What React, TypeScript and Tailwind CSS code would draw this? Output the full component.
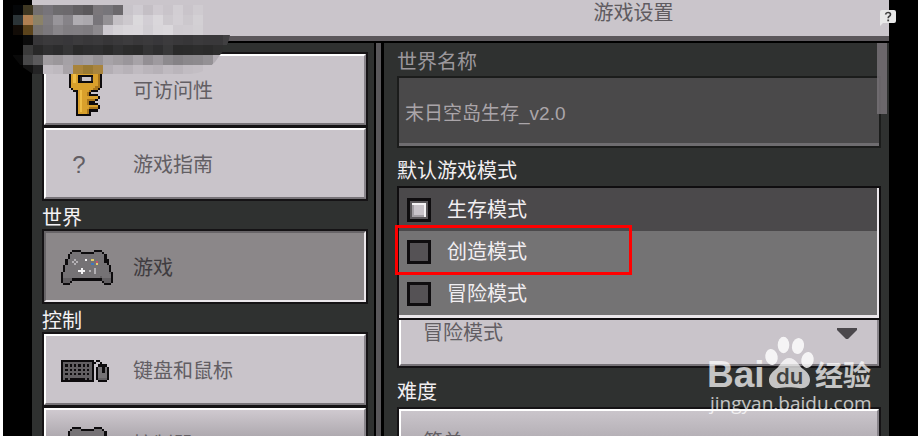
import { useState } from 'react'
import type { ReactNode } from 'react'

const COLORS: Record<string, string> = {
    X: '#0d0b0d',
    g: '#757275',
    d: '#625f62',
    l: '#b3b0b4',
    W: '#f4f2f4',
    Y: '#e0cf6a',
    R: '#c8506a',
    B: '#3f78c0',
    k: '#2c2a2c',
    y: '#d9a02b',
    h: '#efbd45',
    o: '#a8751c',
    c: '#c9c4ca'
}

const CONTROLLER = [
    '.....XXXX......XXXX.....',
    '....XggggXXXXXXggggX....',
    '...XggggggggggggggggX...',
    '...XggggggggggggggggX...',
    '..XggglggggWggYgggggXX..',
    '..XgglglggggggggRgggXX..',
    '..XggglgggggggBgYggggX..',
    '.XggggggggggggggggggggX.',
    '.XgggggggWggggglggggggX.',
    '.XggggggWWWgglglggggggX.',
    'XggggggggWggggglggggggdX',
    'XggggggggggggggggggggggX',
    'XgggggggggggggggggdggggX',
    'XddddXXXXXXXXXXXXXXddddX',
    'XdddX..............XdddX',
    '.XXX................XXX.'
]

const KEY = [
    '..XXXXXXXXXXX..',
    '.XyyyyyyyyyyyX.',
    'XyhhhhhhhhhhyoX',
    'XyhyyyyyyyyyyoX',
    'XyhyXXXXXXXyyoX',
    'XyhyXkcccckyyoX',
    'XyhyXkcccckyyoX',
    'XyhyXXXXXXXyyoX',
    'XyyyyyyyyyyyyoX',
    'XyyyyyyyyyyyooX',
    '.XyyyyyyyyyooX.',
    '..XXyhyyyoXXX..',
    '...XyhyyoX.....',
    '...XyhyyoXXXX..',
    '...XyhyyyyyyyX.',
    '...XyhyyooooX..',
    '...XyhyyoXXX...',
    '...XyhyyoXXXX..',
    '...XyhyyyyyyyX.',
    '...XyhyyyooooX.',
    '...XyhyyoXXXX..',
    '...XyyyyoX.....',
    '...XXXXXXX.....'
]

const KEYBOARD = [
    'XXXXXXXXXXXXXXX.XX....',
    'XdddddddddddddXX..X...',
    'XdXdXdXdXdXdXdX..XXXX.',
    'XdddddddddddddX.XggXgX',
    'XdXdXdXdXdXdXdX.XggXgX',
    'XdddddddddddddX.XggXgX',
    'XdXdXdXdXdXdXdX.XggggX',
    'XdddddddddddddX.XggggX',
    'XdXdXXXXXXXdXdX.XddddX',
    'XXXXXXXXXXXXXXX..XXXX.'
]

function PixelIcon({ rows, className }: { rows: string[]; className: string }) {
    return (
        <svg
            className={className}
            viewBox={`0 0 ${rows[0].length} ${rows.length}`}
            preserveAspectRatio="none"
            shapeRendering="crispEdges"
            aria-hidden="true"
        >
            {rows.flatMap((row, y) =>
                row.split('').map((c, x) =>
                    COLORS[c] ? <rect key={`${x}-${y}`} x={x} y={y} width="1" height="1" fill={COLORS[c]} /> : null
                )
            )}
        </svg>
    )
}

// Censored corner, one colour per block
const MOSAIC = [
    [],
    ['#040608', '#3e3722', '#747070', '#77747a', '#6d6b6e', '#6c696d', '#625f62', '#5b585b', '#7b777b', '#77757a', '#6b686c', '#c8c4ca', '#cfcbd1', '#c4bfc5', '#cfcad0', '#c9c4ca', '#d2ced3', '#c9c4ca', '#cfcbd0'],
    ['#2b3437', '#b08052', '#8b8268', '#7f7c80', '#98959a', '#868388', '#b0adb2', '#aba8ad', '#78757a', '#939094', '#c4c0c5', '#cdc9ce', '#dbd9dc', '#d2ced4', '#dad7db', '#cdc9ce', '#d3cfd4', '#ccc8cd', '#d3d0d4'],
    ['#120c07', '#5c441c', '#777370', '#7b787c', '#89868a', '#817e82', '#827f83', '#7f7c80', '#8d8a8e', '#cdc9cf', '#d5d2d6', '#d9d6da', '#dad7db', '#d0cdd2', '#d9d6da', '#dbd8dc', '#cfcbd0', '#d0ccd1', '#d2cfd3'],
    ['', '#0b0b0b', '#373638', '#3b3a3c', '#3a393b', '#38373a', '#3c3b3d', '#39383a', '#3b3a3c', '#373638', '#3a393b', '#3d3c3e', '#39383a', '#3b3a3c', '#38373a', '#3c3b3d', '#39383a', '#373638', '#3b3a3c', '#39383a', '#39383a', '#414042'],
    ['', '#3a3a3a', '#282828', '#303031', '#2c2c2d', '#353536', '#2a2a2a', '#2d2d2e', '#2f2f30', '#2a2a2a', '#313132', '#2c2c2c', '#2a2a2a', '#343435', '#2e2e2f', '#383839', '#2a2a2a', '#2b2b2b', '#2d2d2d', '#2b2b2b', '#2f2f2f'],
    ['#090909', '#484849', '#5b5a5c', '#a19da1', '#9b979b', '#a5a1a6', '#9d999e', '#a29ea2', '#979397', '#a7a3a8', '#a19da1', '#9a969b', '#a7a3a8', '#938f94', '#9e9a9f', '#8d8a8e', '#858286', '#8b888c', '#8d8a8e', '#949195', '#b3aeb4'],
    ['', '#121212', '#242425', '#c2bdc3', '#beb9bf', '#a8a3a8', '#a9843b', '#9a7a33', '#a9853f', '#b3aeb4', '#bcb7bd', '#b7b2b8', '#c0bbc1', '#bab5bb', '#b6b1b7', '#bfbac0', '#bab5bb', '#c1bcc2', '#c3bec4']
]

function Mosaic() {
    return (
        <svg className="absolute left-[13px] top-0 w-[220px] h-20" viewBox="0 0 220 80" aria-hidden="true">
            <clipPath id="smear">
                <path d="M0 0H220V35H217Q215 47 207 55L202 62Q190 75 175 74H20L8 66L0 56Z" />
            </clipPath>
            <g clipPath="url(#smear)" shapeRendering="crispEdges">
                {MOSAIC.flatMap((row, y) =>
                    row.map((fill, x) =>
                        fill ? <rect key={`${x}-${y}`} x={x * 10} y={y * 10 - 5} width="10" height="10" fill={fill} /> : null
                    )
                )}
            </g>
        </svg>
    )
}

const RAISED = 'bg-[#c9c4ca] text-[#625e63] border-t-white border-l-white border-r-[#88848a] border-b-[#777378]'
const FADED = 'bg-linear-to-b from-[#cfc9cf] to-[#aaa5ab] to-[30px] text-[#625e63] border-t-white border-l-white border-r-[#88848a] border-b-[#777378]'
const PRESSED = 'bg-[#8b8789] text-[#3f3c40] border-t-[#686568] border-l-[#686568] border-r-[#ebe7eb] border-b-[#ebe7eb]'

function NavItem({ icon, label, look, onClick }: { icon: ReactNode; label: string; look: string; onClick: () => void }) {
    return (
        <div className="h-[75px] shrink-0 -mb-px border-2 border-[#151315]">
            <button onClick={onClick} className={`w-full h-full border-2 pt-0.5 pl-[15px] flex items-center gap-5 text-left text-[20px] ${look}`}>
                <span className="w-[52px] flex justify-center">{icon}</span>
                {label}
            </button>
        </div>
    )
}

function NavHeading({ children }: { children: ReactNode }) {
    return <h2 className="h-7 mt-px pt-1.5 shrink-0 flex items-center text-[20px] leading-none text-[#f4f2f4]">{children}</h2>
}

const MODES = ['生存模式', '创造模式', '冒险模式']

function ModeList() {
    const [mode, setMode] = useState('生存模式')

    return (
        <fieldset className="relative z-10 shrink-0 border-2 border-[#0f0d0f] bg-[#747374]">
            <div className="border-b-[3px] border-r-2 border-[#ebe7eb]">
                {MODES.map((m, i) => (
                    <label
                        key={m}
                        className={`relative flex items-center gap-4 pl-2 text-[20px] leading-none text-[#f1eef1] ${
                            i === 0 ? 'h-[43px] bg-[#4b494b]' : 'h-[42px]'
                        }`}
                    >
                        <input
                            type="radio"
                            name="mode"
                            value={m}
                            checked={mode === m}
                            onChange={() => setMode(m)}
                            className="appearance-none w-6 h-6 border-3 border-[#0f0d0f] bg-[#555255] checked:bg-[#c9c4ca] checked:shadow-[inset_0_0_0_2px_#5b585b,inset_-4px_4px_0_0_#f4f2f4,inset_4px_-4px_0_0_#a39fa4]"
                        />
                        {m}
                        {i === 1 && <span className="absolute -left-1 -top-1.5 w-[237px] h-[50px] border-3 border-[#ff0000]" />}
                    </label>
                ))}
            </div>
        </fieldset>
    )
}

function Watermark() {
    return (
        <svg className="absolute right-[38px] bottom-[14px] w-[180px] h-[86px]" viewBox="0 0 180 86" fill="#ffffff" aria-hidden="true">
            <g opacity="0.72">
                <text x="1" y="51" fontFamily="'Liberation Sans', sans-serif" fontWeight="700" fontSize="37">Bai</text>
                <text x="109" y="50" fontFamily="'Noto Sans CJK SC', sans-serif" fontWeight="700" fontSize="28">经验</text>
                <text x="4" y="74" fontFamily="'Open Sans', sans-serif" fontSize="19">jingyan.baidu.com</text>
                <path d="M83 22C90 22 92 29 97 33C103 37 104 41 104 44C104 50 99 53 93 52C87 51 79 51 73 52C67 53 63 49 63 44C63 40 65 37 70 33C75 29 77 22 83 22Z" />
            </g>
            <g opacity="0.82">
                <ellipse cx="65.500" cy="21" rx="6.200" ry="8" transform="rotate(-10 65.5 21)" />
                <ellipse cx="77.500" cy="9" rx="5.800" ry="8.200" />
                <ellipse cx="92" cy="10" rx="6" ry="8" transform="rotate(12 92 10)" />
                <ellipse cx="101.500" cy="24" rx="6.200" ry="8" transform="rotate(10 101.5 24)" />
            </g>
            <text x="70" y="48" fill="#414241" fontFamily="Inter, sans-serif" fontWeight="600" fontSize="22">du</text>
        </svg>
    )
}

export default function App() {
    const [page, setPage] = useState('游戏')
    const [difficulty, setDifficulty] = useState('简单')

    return (
        <div className="relative h-screen overflow-hidden bg-white pl-[3px] pr-1.5 font-['Liberation_Sans','Noto_Sans_CJK_SC',sans-serif]">
            <div className="h-full bg-black px-[29px] flex flex-col">
                <header className="h-[43px] shrink-0 bg-[#cac5cb] border-b-2 border-black">
                    <div className="h-full border-b-[5px] border-[#5b575b] flex justify-center pl-[346px]">
                        <h1 className="text-[20px] leading-[27px] text-[#5f5b60]">游戏设置</h1>
                    </div>
                </header>

                <div className="flex-1 min-h-0 flex bg-[#2f3130]">
                    <nav className="w-[344px] shrink-0 overflow-hidden pt-[9px] pl-2.5 pr-1.5 flex flex-col border-r-2 border-black">
                        <NavItem
                            icon={<PixelIcon rows={KEY} className="w-[33px] h-[50px] mr-1" />}
                            label="可访问性"
                            look={RAISED}
                            onClick={() => setPage('可访问性')}
                        />
                        <NavItem
                            icon={<span className="pr-4 text-[24px]">?</span>}
                            label="游戏指南"
                            look={RAISED}
                            onClick={() => setPage('游戏指南')}
                        />
                        <NavHeading>世界</NavHeading>
                        <NavItem
                            icon={<PixelIcon rows={CONTROLLER} className="w-[52px] h-[35px]" />}
                            label="游戏"
                            look={page === '游戏' ? PRESSED : RAISED}
                            onClick={() => setPage('游戏')}
                        />
                        <NavHeading>控制</NavHeading>
                        <NavItem
                            icon={<PixelIcon rows={KEYBOARD} className="w-12 h-[22px] mr-1" />}
                            label="键盘和鼠标"
                            look={RAISED}
                            onClick={() => setPage('键盘和鼠标')}
                        />
                        <NavItem
                            icon={<PixelIcon rows={CONTROLLER} className="w-[52px] h-[35px]" />}
                            label="控制器"
                            look={FADED}
                            onClick={() => setPage('控制器')}
                        />
                    </nav>

                    <div className="w-[5px] shrink-0 bg-[#59575a]" />

                    <main className="relative flex-1 min-w-0 overflow-hidden border-l-3 border-black pl-[13px] pr-2 flex flex-col">
                        <label htmlFor="world" className="h-[33px] pt-1 shrink-0 flex items-center text-[20px] leading-none text-[#9b979c]">
                            世界名称
                        </label>
                        <div className="h-[72px] shrink-0 border-2 border-[#1b1c1b]">
                            <input
                                id="world"
                                defaultValue="末日空岛生存_v2.0"
                                className="w-full h-full bg-[#4a494a] border-b-3 border-[#6f6d70] pt-0.5 px-1.5 text-[19px] text-[#aaa5a9] outline-none"
                            />
                        </div>

                        <h2 className="h-[38px] shrink-0 pt-2 text-[20px] leading-[31px] text-[#f1eef1]">默认游戏模式</h2>
                        <ModeList />

                        {/* Tucked under the open list */}
                        <div className="relative shrink-0 h-[70px] -mt-[22px] border-2 border-[#151315]">
                            <select
                                aria-label="默认游戏模式"
                                defaultValue="冒险模式"
                                className="appearance-none w-full h-full border-2 px-[22px] text-[20px] outline-none bg-[#c9c4ca] text-[#625e63] border-t-white border-l-white border-r-[#88848a] border-b-[#777378]"
                            >
                                {MODES.map(m => (
                                    <option key={m}>{m}</option>
                                ))}
                            </select>
                            <svg className="absolute right-[22px] top-[28px] w-5 h-[11px] pointer-events-none" viewBox="0 0 20 11">
                                <path d="M0 0H20V2L11 11H9L0 2Z" fill="#4b484c" />
                            </svg>
                        </div>

                        <label htmlFor="difficulty" className="h-[39px] shrink-0 pt-2 text-[20px] leading-[33px] text-[#f1eef1]">
                            难度
                        </label>
                        <div className="h-[70px] shrink-0 border-2 border-[#151315]">
                            <select
                                id="difficulty"
                                value={difficulty}
                                onChange={e => setDifficulty(e.target.value)}
                                className="appearance-none w-full h-full border-2 px-[22px] text-[20px] outline-none bg-linear-to-b from-[#cac5cb] to-[#aaa5ab] to-[40px] text-[#625e63] border-t-white border-l-white border-r-[#88848a] border-b-[#777378]"
                            >
                                <option>和平</option>
                                <option>简单</option>
                                <option>普通</option>
                                <option>困难</option>
                            </select>
                        </div>

                        <div className="absolute right-0.5 top-0 w-2.5 h-[71px] bg-[#757175]/85" />
                    </main>
                </div>
            </div>

            <Mosaic />

            <button aria-label="帮助" className="absolute right-7 top-[10px] w-4 h-4">
                <svg viewBox="0 0 16 16" className="w-4 h-4">
                    <path d="M2 0H14Q16 0 16 2V11Q16 13 14 13H3L0 16V2Q0 0 2 0Z" fill="#e8e8e8" />
                    <path d="M5.500 4.500Q6 2.500 8 2.500Q10.500 2.500 10.500 4.500Q10.500 5.800 9 6.500Q8.200 7 8.200 8.300" fill="none" stroke="#3c3c3c" strokeWidth="1.600" />
                    <rect x="7.300" y="9.500" width="1.800" height="1.800" fill="#3c3c3c" />
                </svg>
            </button>

            <Watermark />
        </div>
    )
}
